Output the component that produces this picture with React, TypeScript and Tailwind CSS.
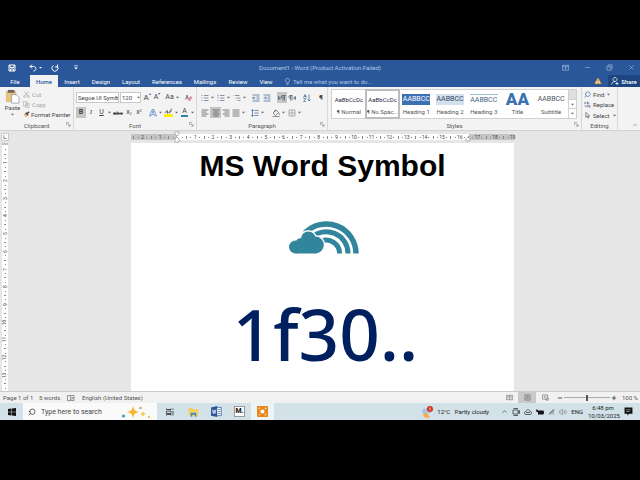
import React from "react";
import {
  ChevronUp,
  Minus,
  Plus,
  Search,
  TriangleAlert,
  Volume2,
  X,
} from "lucide-react";

const tabs = [
  { name: "Insert", width: "w-[28px]" },
  { name: "Design", width: "w-[30px]" },
  { name: "Layout", width: "w-[30px]" },
  { name: "References", width: "w-[42px]" },
  { name: "Mailings", width: "w-[34px]" },
  { name: "Review", width: "w-[32px]" },
  { name: "View", width: "w-[24px]" },
];

const styleCards = [
  { name: "¶ Normal", sample: "AaBbCcDc", look: "text-[6px] text-gray-800" },
  { name: "¶ No Spac...", sample: "AaBbCcDc", look: "text-[6px] text-gray-800", active: true },
  { name: "Heading 1", sample: "AABBCC", look: "text-[7px] text-white bg-[#3c72b4]" },
  { name: "Heading 2", sample: "AABBCC", look: "text-[7px] text-[#33465c] bg-[#d5e0ee]" },
  { name: "Heading 3", sample: "AABBCC", look: "text-[7px] text-[#44647c] border-t border-[#9fc0d4]" },
  { name: "Title", sample: "AA", look: "text-[17px] font-black text-[#3c72b4]" },
  { name: "Subtitle", sample: "AABBCC", look: "text-[7px] text-gray-600" },
];

// one cell per quarter of a unit
const acrossMarks = Array.from({ length: 87 }, (_, i) => i - 10);
const downMarks = Array.from({ length: 56 }, (_, i) => i);

function Caret() {
  return (
    <svg viewBox="0 0 5 5" className="w-[5px] h-[5px] shrink-0" fill="#666">
      <path d="M1 1.7h3L2.5 3.4z" />
    </svg>
  );
}

function Tool({
  label,
  className = "w-[10px]",
  active,
  children,
}: {
  label: string;
  className?: string;
  active?: boolean;
  children: React.ReactNode;
}) {
  return (
    <button
      aria-label={label}
      className={`h-[11px] shrink-0 flex items-center justify-center leading-none ${className} ${active ? "bg-[#c5c5c5]" : ""}`}
    >
      {children}
    </button>
  );
}

function Glyph({ d, color = "#555", size = "w-[8px] h-[8px]" }: { d: string; color?: string; size?: string }) {
  return (
    <svg viewBox="0 0 16 16" className={`shrink-0 ${size}`} fill="none" stroke={color} strokeWidth="1.5">
      <path d={d} />
    </svg>
  );
}

function Launcher({ label }: { label: string }) {
  return (
    <button aria-label={label} className="absolute right-[2px] bottom-[3px]">
      <Glyph d="M2 10V2h8M6 6l7 7M13 7v6H7" size="w-[5px] h-[5px]" />
    </button>
  );
}

function Group({ name, className, launcher = true, children }: { name: string; className: string; launcher?: boolean; children: React.ReactNode }) {
  return (
    <section className={`relative flex flex-col border-r border-[#d8d8d8] ${className}`}>
      <div className="h-[35px]">{children}</div>
      <h2 className="text-center text-[6px] leading-[8px] text-[#555]">{name}</h2>
      {launcher && <Launcher label={`${name} settings`} />}
    </section>
  );
}

function TitleBar() {
  return (
    <header className="bg-[#2a579a] text-white">
      <div className="h-[15px] grid grid-cols-[1fr_auto_1fr] items-center">
        <div className="flex items-center pl-[8px]">
          <button aria-label="Save" className="w-[9px]">
            <svg viewBox="0 0 16 16" className="w-[8px] h-[8px]" fill="none" stroke="white" strokeWidth="2">
              <path d="M2 2h12v12H2zM4 2v5h8V2M5 14v-4h6v4" />
            </svg>
          </button>
          <button aria-label="Undo" className="ml-[12px] w-[9px]">
            <svg viewBox="0 0 16 16" className="w-[8px] h-[8px]" fill="none" stroke="white" strokeWidth="2">
              <path d="M6 1 2 5l4 4M2 5h7c7 0 6 9 0 9" />
            </svg>
          </button>
          <svg viewBox="0 0 5 5" className="w-[5px] h-[5px]" fill="white">
            <path d="M1 2h3L2.5 3.5z" />
          </svg>
          <button aria-label="Redo" className="ml-[8px] w-[9px]">
            <svg viewBox="0 0 16 16" className="w-[8px] h-[8px]" fill="none" stroke="white" strokeWidth="2">
              <path d="M5 3a6 6 0 1 0 7 1M8 6h5V1" />
            </svg>
          </button>
          <button aria-label="Customize toolbar" className="ml-[13px]">
            <svg viewBox="0 0 5 5" className="w-[6px] h-[6px]" fill="white">
              <path d="M1 .5h3v.6H1zM1 2h3L2.5 3.8z" />
            </svg>
          </button>
        </div>
        <h1 className="text-[6px] text-[#b4c7e4]">Document1 - Word (Product Activation Failed)</h1>
        <div className="flex items-center justify-end gap-[15px] pr-[5px] text-[#a9bedd]">
          <button aria-label="Ribbon display options">
            <Glyph d="M1 3h14v11H1zM1 6h14M8 12V8M6 10l2-2 2 2" color="#a9bedd" size="w-[7px] h-[7px]" />
          </button>
          <button aria-label="Minimize"><Minus className="w-[7px] h-[7px]" /></button>
          <button aria-label="Restore">
            <Glyph d="M2 6h9v8H2zM5 6V2h9v8h-3" color="#a9bedd" size="w-[7px] h-[7px]" />
          </button>
          <button aria-label="Close"><X className="w-[7px] h-[7px]" /></button>
        </div>
      </div>
      <nav className="h-[12px] flex items-stretch text-[6px]">
        <button className="w-[30px]">File</button>
        <button className="w-[28px] bg-[#f3f3f3] text-[#2a579a] font-medium">Home</button>
        {tabs.map((tab) => (
          <button key={tab.name} className={tab.width}>{tab.name}</button>
        ))}
        <label className="ml-[6px] flex items-center gap-[2px] flex-1 text-[#b4c7e4]">
          <Glyph d="M6 12V10c-5-3-2-9 2-9s7 6 2 9v2zM6 15h4" color="#c5d5ee" size="w-[7px] h-[7px]" />
          <input
            aria-label="Tell me what you want to do"
            placeholder="Tell me what you want to do..."
            className="w-[110px] h-[10px] bg-transparent placeholder:text-[#b4c7e4] outline-none"
          />
        </label>
        <TriangleAlert className="self-center mr-[6px] w-[8px] h-[8px] text-[#7a5a20] fill-[#f5d79b]" />
        <button className="w-[32px] bg-[#1d4580] flex items-center justify-center gap-[2px] text-[6px] font-medium">
          <Glyph d="M8 9a4 4 0 1 1 .1 0zM1 15c1-4 4-6 7-6M9 13h6M12 10v6" color="white" size="w-[8px] h-[8px]" />
          Share
        </button>
      </nav>
    </header>
  );
}

function Clipboard() {
  return (
    <Group name="Clipboard" className="w-[74px] shrink-0">
      <div className="flex pl-[4px] pt-[2px] gap-[2px]">
        <button className="w-[17px] flex flex-col items-center text-[6px] leading-[8px] text-[#444]">
          <svg viewBox="0 0 16 16" className="w-[15px] h-[15px]">
            <path d="M1 2h11v12H1z" fill="#e9c07c" />
            <path d="M3 1h7v3H3z" fill="#666" />
            <path d="M7 6h5l3 3v6H7z" fill="#fff" stroke="#8b96a8" strokeWidth=".8" />
          </svg>
          Paste
          <Caret />
        </button>
        <div className="flex flex-col text-[6px] text-[#a0a0a0]">
          <button className="h-[10px] flex items-center gap-[2px]">
            <Glyph d="M3 1l8 10M13 1 5 11M5 13a2 2 0 1 1-3-2 2 2 0 0 1 3 2zM14 13a2 2 0 1 1-3-2 2 2 0 0 1 3 2z" color="#999" size="w-[7px] h-[7px]" />
            Cut
          </button>
          <button className="h-[10px] flex items-center gap-[2px]">
            <Glyph d="M1 1h8v10H1zM6 5h8v10H6zM8 8h4M8 11h4" color="#b0b0b0" size="w-[7px] h-[7px]" />
            Copy
          </button>
          <button className="h-[11px] flex items-center gap-[1px] text-[#444] whitespace-nowrap">
            <svg viewBox="0 0 16 16" className="w-[7px] h-[7px]">
              <path d="M1 7l6-2 4 4-4 6z" fill="#e8b565" />
              <path d="M6 4l6 6M9 6l5-4" stroke="#444" strokeWidth="3" />
            </svg>
            Format Painter
          </button>
        </div>
      </div>
    </Group>
  );
}

function FontGroup() {
  return (
    <Group name="Font" className="w-[123px] shrink-0">
      <div className="pl-[2px] pt-[5px] flex flex-col gap-[4px] text-[#444]">
        <div className="flex items-center h-[11px]">
          <div className="relative w-[43px] shrink-0">
            <select aria-label="Font name" className="block appearance-none w-full h-[11px] bg-white border border-[#c8c8c8] pl-[1px] text-[6px] leading-[8px]">
              <option>Segoe UI Symb</option>
            </select>
            <span className="absolute right-0 top-[3px] pointer-events-none"><Caret /></span>
          </div>
          <div className="relative w-[21px] mx-[1px] shrink-0">
            <select aria-label="Font size" className="block appearance-none w-full h-[11px] bg-white border border-[#c8c8c8] pl-[1px] text-[6px] leading-[8px]">
              <option>120</option>
            </select>
            <span className="absolute right-0 top-[3px] pointer-events-none"><Caret /></span>
          </div>
          <Tool label="Grow font" className="w-[10px] text-[8px]">A<span className="text-[4px] text-[#2a579a] self-start">▴</span></Tool>
          <Tool label="Shrink font" className="w-[10px] text-[7px]">A<span className="text-[4px] text-[#2a579a] self-start">▾</span></Tool>
          <Tool label="Change case" className="w-[11px] ml-[2px] text-[7px]">Aa</Tool>
          <Caret />
          <Tool label="Clear formatting" className="w-[10px] ml-[4px]">
            <svg viewBox="0 0 16 16" className="w-[8px] h-[8px]">
              <path d="M1 11 4 2l3 9M2 8h4" stroke="#666" strokeWidth="1.5" fill="none" />
              <path d="M5 11l6-7 4 3-6 8z" fill="#e08ca4" />
            </svg>
          </Tool>
        </div>
        <div className="flex items-center h-[11px] text-[7px]">
          <Tool label="Bold" active><b>B</b></Tool>
          <Tool label="Italic"><i className="font-serif">I</i></Tool>
          <Tool label="Underline" className="w-[11px]"><u>U</u></Tool>
          <Caret />
          <Tool label="Strikethrough" className="w-[12px] text-[6px]"><s>abc</s></Tool>
          <Tool label="Subscript">x<sub className="text-[4px]">2</sub></Tool>
          <Tool label="Superscript">x<sup className="text-[4px]">2</sup></Tool>
          <Tool label="Text effects" className="w-[10px] ml-[4px]">
            <Glyph d="M1 14 6 1h4l5 13h-3l-1-3H5l-1 3zM6 8l2-5 2 5z" color="#5b8cc8" />
          </Tool>
          <Caret />
          <Tool label="Highlight" className="w-[11px]">
            <svg viewBox="0 0 16 16" className="w-[9px] h-[9px]">
              <path d="M0 11h16v5H0z" fill="#fff200" />
              <path d="M2 9c0-4 4-4 4 0M6 4v6M8 9l6-8M9 9l5-4" stroke="#555" strokeWidth="1.5" fill="none" />
            </svg>
          </Tool>
          <Caret />
          <Tool label="Font color" className="w-[11px]">
            <span className="border-b-2 border-[#2e849c] leading-[7px] px-[1px]">A</span>
          </Tool>
          <Caret />
        </div>
      </div>
    </Group>
  );
}

function ParagraphGroup() {
  return (
    <Group name="Paragraph" className="w-[131px] shrink-0">
      <div className="pl-[3px] pt-[5px] flex flex-col gap-[4px]">
        <div className="flex items-center h-[11px]">
          <Tool label="Bullets"><Glyph d="M6 3h9M6 8h9M6 13h9M1 3h2M1 8h2M1 13h2" color="#5f7390" /></Tool>
          <Caret />
          <Tool label="Numbering" className="w-[11px]"><Glyph d="M6 3h9M6 8h9M6 13h9M2 1v4M1 8h2M1 13h2" color="#5f7390" /></Tool>
          <Caret />
          <Tool label="Multilevel list" className="w-[11px]"><Glyph d="M4 3h9M7 8h8M10 13h5M1 3h1M4 8h1M7 13h1" color="#5f7390" /></Tool>
          <Caret />
          <Tool label="Decrease indent" className="w-[11px] ml-[3px]"><Glyph d="M1 2h14M9 6h6M9 10h6M1 14h14M7 8H1l3-3M1 8l3 3" color="#44699c" /></Tool>
          <Tool label="Increase indent" className="w-[11px]"><Glyph d="M1 2h14M9 6h6M9 10h6M1 14h14M1 8h6L4 5M7 8l-3 3" color="#44699c" /></Tool>
          <Tool label="Left to right" className="w-[10px] ml-[5px]" active><Glyph d="M1 5l4 3-4 3zM15 3H9c-3 0-3 5 0 5M10 3v10M13 3v10" color="#44566e" /></Tool>
          <Tool label="Right to left"><Glyph d="M15 5l-4 3 4 3zM9 3H4C1 3 1 8 4 8M5 3v10M8 3v10" color="#44566e" /></Tool>
          <Tool label="Sort" className="w-[10px] ml-[5px]"><Glyph d="M1 7l3-6 3 6M2 5h4M1 9h5l-5 6h5M12 1v13M9 11l3 3 3-3" color="#44699c" /></Tool>
          <Tool label="Show marks" className="w-[10px] ml-[4px] text-[8px] text-[#444]">¶</Tool>
        </div>
        <div className="flex items-center h-[11px]">
          <Tool label="Align left"><Glyph d="M1 2h14M1 6h10M1 10h14M1 14h10" /></Tool>
          <Tool label="Center" className="w-[11px]" active><Glyph d="M1 2h14M3 6h10M1 10h14M3 14h10" /></Tool>
          <Tool label="Align right"><Glyph d="M1 2h14M5 6h10M1 10h14M5 14h10" /></Tool>
          <Tool label="Justify"><Glyph d="M1 2h14M1 6h14M1 10h14M1 14h14" /></Tool>
          <Caret />
          <Tool label="Line spacing" className="w-[10px] ml-[4px]"><Glyph d="M7 3h8M7 8h8M7 13h8M3 1v14M1 4l2-3 2 3M1 12l2 3 2-3" color="#44699c" /></Tool>
          <Caret />
          <Tool label="Shading" className="w-[10px] ml-[6px]"><Glyph d="M2 8l6-6 5 5-6 6zM6 1v5M13 7c2 3 2 5 1 5M1 15h14" color="#666" /></Tool>
          <Caret />
          <Tool label="Borders" className="w-[11px]"><Glyph d="M2 2h12v12H2zM8 2v12M2 8h12" color="#999" /></Tool>
          <Caret />
        </div>
      </div>
    </Group>
  );
}

function StylesGroup() {
  return (
    <Group name="Styles" className="flex-1 min-w-0">
      <div className="pl-[3px] pr-[4px] pt-[2px]">
        <div className="h-[30px] flex bg-white border border-[#d0d0d0]">
          {styleCards.map((card) => (
            <button
              key={card.name}
              className={`flex-1 min-w-0 flex flex-col items-center ${card.active ? "outline-2 -outline-offset-1 outline-[#bdbdbd]" : ""}`}
            >
              <span className="h-[18px] flex items-center justify-center">
                <span className={`min-w-[28px] h-[11px] leading-[11px] text-center whitespace-nowrap ${card.look}`}>{card.sample}</span>
              </span>
              <span className="text-[6px] leading-[8px] whitespace-nowrap text-[#555]">{card.name}</span>
            </button>
          ))}
          <div className="w-[8px] flex flex-col border-l border-[#d0d0d0] divide-y divide-[#d0d0d0]">
            <button aria-label="Previous styles" className="flex-1 bg-[#dedede]" />
            <button aria-label="Next styles" className="flex-1 flex items-center justify-center"><Caret /></button>
            <button aria-label="More styles" className="flex-1 flex items-center justify-center"><Caret /></button>
          </div>
        </div>
      </div>
    </Group>
  );
}

function EditingGroup() {
  return (
    <Group name="Editing" className="w-[36px] shrink-0" launcher={false}>
      <div className="pl-[2px] pt-[2px] flex flex-col text-[6px] text-[#444]">
        <button className="h-[10px] flex items-center gap-[2px]">
          <Search className="w-[7px] h-[7px] -scale-x-100 text-[#44699c]" />
          Find
          <Caret />
        </button>
        <button className="h-[11px] flex items-center gap-[2px]">
          <Glyph d="M1 7l2-5 2 5M8 1v6h3V4H8M3 9v4h3M9 14c-3 0-3-4 0-4M11 9v5h3v-3h-3" color="#5f7390" size="w-[7px] h-[7px]" />
          Replace
        </button>
        <button className="h-[11px] flex items-center gap-[2px]">
          <Glyph d="M4 1v11l3-3 2 5 2-1-2-4h4z" size="w-[7px] h-[7px]" />
          Select
          <Caret />
        </button>
      </div>
    </Group>
  );
}

function Ruler() {
  return (
    <div className="h-[12px] flex items-center pl-[1px] pr-[3px]">
      <button aria-label="Tab stop" className="w-[8px] h-[8px] bg-white border border-[#ccc] flex items-center justify-center">
        <Glyph d="M5 3v9h7" color="#333" size="w-[6px] h-[6px]" />
      </button>
      <div className="flex-1 flex justify-center">
        <div className="relative w-[61%] h-[6px] flex items-center bg-[linear-gradient(to_right,#c4c4c4_12%,#fff_12%,#fff_88%,#c4c4c4_88%)] text-[5px] leading-none text-[#444]">
          {acrossMarks.map((mark) => (
            <span key={mark} className="flex-1 min-w-0 flex justify-center">
              {mark === 0 ? "" : mark % 4 === 0 ? (
                Math.abs(mark / 4)
              ) : (
                <i className={`w-px bg-[#888] ${mark % 2 === 0 ? "h-[3px]" : "h-px"}`} />
              )}
            </span>
          ))}
          <svg viewBox="0 0 6 12" className="absolute left-[11%] top-[-3px] w-[6px] h-[12px]" fill="#fff" stroke="#999" strokeWidth=".7">
            <path d="M1 1h4v2L3 5 1 3zM3 6l2 2v3H1V8z" />
          </svg>
          <svg viewBox="0 0 6 6" className="absolute left-[87%] top-[2px] w-[6px] h-[6px]" fill="#fff" stroke="#999" strokeWidth=".7">
            <path d="M3 1l2 2v2H1V3z" />
          </svg>
        </div>
      </div>
    </div>
  );
}

function CloudShape() {
  return (
    <>
      <circle cx="6.5" cy="27" r="6.5" />
      <circle cx="12" cy="23.5" r="5.5" />
      <circle cx="19.3" cy="18.7" r="7.2" />
      <circle cx="26.3" cy="25" r="8.5" />
      <path d="M6.5 24h20v9.5h-20z" />
    </>
  );
}

function RainbowCloud() {
  return (
    <svg viewBox="0 0 70 34" className="w-[70px] h-[34px]" role="img" aria-label="Cloud and rainbow">
      <g fill="none" stroke="#31859c">
        <path d="M16 13A29.7 29.7 0 0 1 67 33.5" strokeWidth="5.5" />
        <path d="M22 18A21.7 21.7 0 0 1 59 33.5" strokeWidth="5" />
        <path d="M32 21.3A13.3 13.3 0 0 1 50.6 33.5" strokeWidth="5" />
      </g>
      <g fill="#fff" stroke="#fff" strokeWidth="3">
        <CloudShape />
      </g>
      <g fill="#31859c">
        <CloudShape />
      </g>
    </svg>
  );
}

function Document() {
  return (
    <main className="flex-1 min-h-0 flex pl-[2px] pr-[3px] border-b border-[#c9c9c9]">
      <div className="w-[6px] flex flex-col items-center bg-[linear-gradient(#c4c4c4_1%,#fff_1%)] text-[5px] leading-none text-[#444]">
        {downMarks.map((mark) => (
          <span key={mark} className="flex-1 min-h-0 flex items-center">
            {mark === 0 ? "" : mark % 4 === 0 ? (
              <span className="-rotate-90">{mark / 4}</span>
            ) : (
              <i className={`h-px bg-[#888] ${mark % 2 === 0 ? "w-[2px]" : "w-px"}`} />
            )}
          </span>
        ))}
      </div>
      <div className="flex-1 flex justify-center">
        <article className="w-[61%] bg-white flex flex-col items-center overflow-hidden">
          <p className="mt-[5px] text-[30px] leading-[36px] font-bold text-black font-['Liberation_Sans',sans-serif] whitespace-nowrap">
            MS Word Symbol
          </p>
          <div className="mt-[36px] pl-[2px]">
            <RainbowCloud />
          </div>
          <p className="mt-[28px] pl-[6px] text-[71px] leading-[104px] font-medium text-[#001f5f] font-['Noto_Sans',sans-serif] whitespace-nowrap">1f30..</p>
        </article>
      </div>
    </main>
  );
}

function StatusBar() {
  return (
    <footer className="h-[11px] shrink-0 flex items-center bg-[#f1f1f1] pl-[3px] pr-[2px] text-[6px] text-[#555] whitespace-nowrap">
      <span className="w-[36px]">Page 1 of 1</span>
      <span className="w-[28px]">5 words</span>
      <Glyph d="M1 3h6v10H1zM7 3h7v10H7M9 6l4 5M13 6l-4 5" color="#777" size="w-[8px] h-[8px]" />
      <span className="ml-[7px]">English (United States)</span>
      <div className="ml-auto flex items-center h-full">
        <button aria-label="Read mode" className="w-[18px] flex justify-center"><Glyph d="M1 3h7v10H1zM8 3h7v10H8M3 6h3M3 9h3M10 6h3M10 9h3" color="#777" size="w-[7px] h-[7px]" /></button>
        <button aria-label="Print layout" className="w-[18px] h-full bg-[#c9c9c9] flex justify-center items-center"><Glyph d="M2 2h12v12H2zM5 5h6M5 8h6M5 11h6" color="#666" size="w-[7px] h-[7px]" /></button>
        <button aria-label="Web layout" className="w-[19px] flex justify-center"><Glyph d="M1 2h12v10H1zM4 5h6M4 8h4M15 12a3 3 0 1 1-6 0 3 3 0 0 1 6 0z" color="#777" size="w-[7px] h-[7px]" /></button>
        <button aria-label="Zoom out" className="ml-[2px]"><Minus className="w-[6px] h-[6px]" strokeWidth={4} /></button>
        <input
          type="range"
          aria-label="Zoom"
          defaultValue={50}
          className="mx-[1px] w-[46px] h-[7px] appearance-none bg-[linear-gradient(#aaa,#aaa)] bg-[length:100%_1px] bg-center bg-no-repeat [&::-webkit-slider-thumb]:appearance-none [&::-webkit-slider-thumb]:w-[2px] [&::-webkit-slider-thumb]:h-[6px] [&::-webkit-slider-thumb]:bg-[#555]"
        />
        <button aria-label="Zoom in"><Plus className="w-[6px] h-[6px]" strokeWidth={4} /></button>
        <span className="ml-[5px]">100 %</span>
      </div>
    </footer>
  );
}

function Taskbar() {
  return (
    <div className="h-[17px] shrink-0 flex items-center bg-[#d2e2e8] text-[7px] text-[#222] whitespace-nowrap">
      <button aria-label="Start" className="w-[23px] flex justify-center">
        <svg viewBox="0 0 16 16" className="w-[8px] h-[8px]" fill="#111">
          <path d="M0 2l7-1v6.5H0zM8 1l8-1v7.5H8zM0 8.5h7V15l-7-1zM8 8.5h8V16l-8-1z" />
        </svg>
      </button>
      <label className="w-[134px] h-full bg-[#fafafa] flex items-center pl-[5px]">
        <Search className="w-[8px] h-[8px]" transform="scale(-1 1)" />
        <input aria-label="Search" placeholder="Type here to search" className="ml-[5px] w-[80px] h-[12px] bg-transparent outline-none placeholder:text-[#444]" />
        <svg viewBox="0 0 30 14" className="w-[30px] h-[14px]">
          <path d="M12 1c1 4 2 5 6 6-4 1-5 2-6 6-1-4-2-5-6-6 4-1 5-2 6-6z" fill="#f5b82e" />
          <path d="M22 6c.5 2 1 2.5 3 3-2 .5-2.5 1-3 3-.5-2-1-2.5-3-3 2-.5 2.5-1 3-3z" fill="#f7c64e" />
          <circle cx="2.5" cy="11" r="1.5" fill="#3a97b8" />
          <circle cx="19.5" cy="3" r="1" fill="#c86f4a" />
          <circle cx="28" cy="12" r="1" fill="#e8b04a" />
        </svg>
      </label>
      <button aria-label="Task view" className="w-[25px] flex justify-center">
        <Glyph d="M1 1v2h9V1M1 6h9v5H1zM1 15v-2h9v2M14 1v3M14 6v9" color="#222" size="w-[8px] h-[8px]" />
      </button>
      <button aria-label="File Explorer" className="w-[23px] flex justify-center">
        <svg viewBox="0 0 16 14" className="w-[11px] h-[10px]">
          <path d="M1 1h5l1 2h8v10H1z" fill="#f7cf5c" />
          <path d="M4 14V8h8v6h-2v-3H6v3z" fill="#3b8bc9" />
        </svg>
      </button>
      <button aria-label="Word" className="w-[23px] flex justify-center">
        <svg viewBox="0 0 16 16" className="w-[11px] h-[11px]">
          <path d="M8 2h7v12H8z" fill="#fff" stroke="#2a579a" />
          <path d="M10 5h4M10 8h4M10 11h4" stroke="#2a579a" />
          <path d="M0 2l9-2v16l-9-2z" fill="#2a579a" />
          <path d="M2 5l1.3 6L4.6 6l1.3 5L7.2 5" stroke="#fff" fill="none" />
        </svg>
      </button>
      <button className="w-[23px] flex justify-center">
        <span className="w-[11px] h-[11px] bg-white border border-[#999] text-[7px] leading-[9px] font-extrabold text-center">M.</span>
      </button>
      <button aria-label="Recorder" className="w-[23px] h-full bg-[#edf4f6] flex items-center justify-center">
        <svg viewBox="0 0 16 16" className="w-[11px] h-[11px]">
          <rect width="16" height="16" rx="1" fill="#e98516" />
          <circle cx="8" cy="8" r="3" fill="#fff" />
          <path d="M3 5V3h2M11 3h2v2M13 11v2h-2M5 13H3v-2" stroke="#fff" fill="none" />
        </svg>
      </button>
      <div className="ml-auto flex items-center">
        <button className="flex items-center gap-[4px]">
          <svg viewBox="0 0 16 16" className="w-[12px] h-[12px]">
            <path d="M9 6a5 5 0 1 0 3 8A6 6 0 0 1 9 6z" fill="#f3ac4d" />
            <path d="M2 9C0 5 3 3 5 4c2-3 6-1 6 2 3 0 3 4 0 4z" fill="#abc4e4" />
            <circle cx="12" cy="4" r="4" fill="#d6301f" />
            <path d="M12 2v4" stroke="#fff" />
          </svg>
          <span className="text-[6px]">12°C&nbsp;&nbsp; Partly cloudy</span>
        </button>
        <div className="ml-[12px] flex items-center gap-[4px]">
          <ChevronUp className="w-[7px] h-[7px]" />
          <Glyph d="M3 1h9M3 15h9M2 4h10v8H2zM12 7l3-2v6l-3-2" color="#333" size="w-[8px] h-[8px]" />
          <Glyph d="M4 13c-4 0-4-6 0-6 1-5 8-4 8 0 4 0 4 6 0 6zM4 9h8" color="#333" size="w-[8px] h-[8px]" />
          <svg viewBox="0 0 16 16" className="w-[8px] h-[8px]" fill="#111">
            <path d="M4 5h11v8H4zM0 3h3v2h2v3H1zM15 7h1v4h-1z" />
          </svg>
          <Glyph d="M2 14 14 3M5 14c0-4 3-7 9-8M9 14c0-2 2-4 5-4M13 14h1" color="#444" size="w-[7px] h-[7px]" />
          <Volume2 className="w-[8px] h-[8px]" strokeWidth={1} />
          <span className="text-[6px]">ENG</span>
        </div>
        <div className="ml-[5px] w-[30px] text-center text-[6px] leading-[8px]">
          6:48 pm
          <br />
          10/03/2025
        </div>
        <button aria-label="Notifications" className="ml-[6px] mr-[7px]">
          <svg viewBox="0 0 16 16" className="w-[9px] h-[9px]">
            <path d="M1 1h14v11H9l-3 3v-3H1z" fill="#111" />
            <path d="M4 5h8M4 8h6" stroke="#d2e2e8" />
          </svg>
        </button>
      </div>
    </div>
  );
}

export default function App() {
  return (
    <div className="h-screen flex flex-col bg-black py-[60px] font-['Roboto','Noto_Sans',sans-serif]">
      <TitleBar />
      <div className="flex-1 min-h-0 flex flex-col bg-[#e6e6e6]">
        <div className="h-[44px] shrink-0 flex bg-[#f3f3f3] border-b border-[#d2d2d2]">
          <Clipboard />
          <FontGroup />
          <ParagraphGroup />
          <StylesGroup />
          <EditingGroup />
          <button aria-label="Collapse ribbon" className="w-[22px] flex items-end justify-end p-[2px]">
            <ChevronUp className="w-[6px] h-[6px] text-[#555]" />
          </button>
        </div>
        <Ruler />
        <Document />
        <StatusBar />
      </div>
      <Taskbar />
    </div>
  );
}
